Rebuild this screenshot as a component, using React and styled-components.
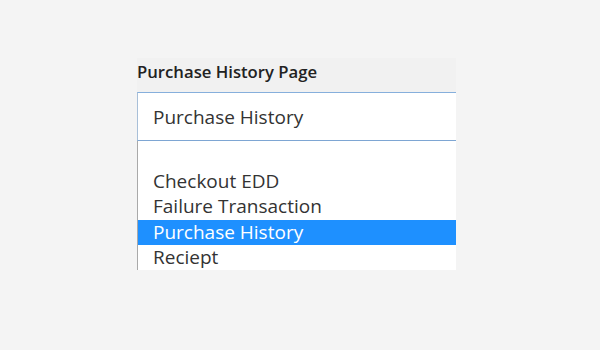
import React from 'react';
import styled, { createGlobalStyle } from 'styled-components';

const GlobalStyle = createGlobalStyle`
    body {
        margin: 0;
        background-color: #f4f4f4;
        font-family: "Open Sans", "Liberation Sans", sans-serif;
    }
`;

const Page = styled.div`
    width: 600px;
    height: 350px;
    padding: 58px 0 0 137px;
    box-sizing: border-box;
`;

const Field = styled.div`
    display: flex;
    flex-direction: column;
    width: 319px;
    background-color: #f1f1f1;
`;

const Label = styled.div`
    font-size: 16.7px;
    font-weight: 600;
    color: #222;
    height: 34px;
    line-height: 28px;
`;

const SelectBox = styled.div`
    display: flex;
    align-items: center;
    height: 47px;
    padding-left: 15px;
    background-color: #fff;
    border-top: 1px solid #86afdc;
    border-bottom: 1px solid #7ea6d3;
    border-left: 1px solid #a8bfd8;
    font-size: 19px;
    color: #333;
`;

const ListBox = styled.ul`
    list-style: none;
    margin: 0;
    padding: 3px 0 0 0;
    height: 126px;
    overflow: hidden;
    background-color: #fff;
    border-left: 1px solid #a9a9a9;
`;

const Option = styled.li`
    height: 25.2px;
    line-height: 25.2px;
    padding-left: 15px;
    font-size: 19px;
    color: ${(p) => (p.$selected ? '#fff' : '#333')};
    background-color: ${(p) => (p.$selected ? '#1e90ff' : 'transparent')};
    white-space: nowrap;
`;

const options = ['', 'Checkout EDD', 'Failure Transaction', 'Purchase History', 'Reciept'];

function App() {
    const selected = 'Purchase History';
    return (
        <>
            <GlobalStyle />
            <Page>
                <Field>
                    <Label>Purchase History Page</Label>
                    <SelectBox>{selected}</SelectBox>
                    <ListBox>
                        {options.map((o, i) => (
                            <Option key={i} $selected={o === selected}>{o || '\u00A0'}</Option>
                        ))}
                    </ListBox>
                </Field>
            </Page>
        </>
    );
}

export default App;
